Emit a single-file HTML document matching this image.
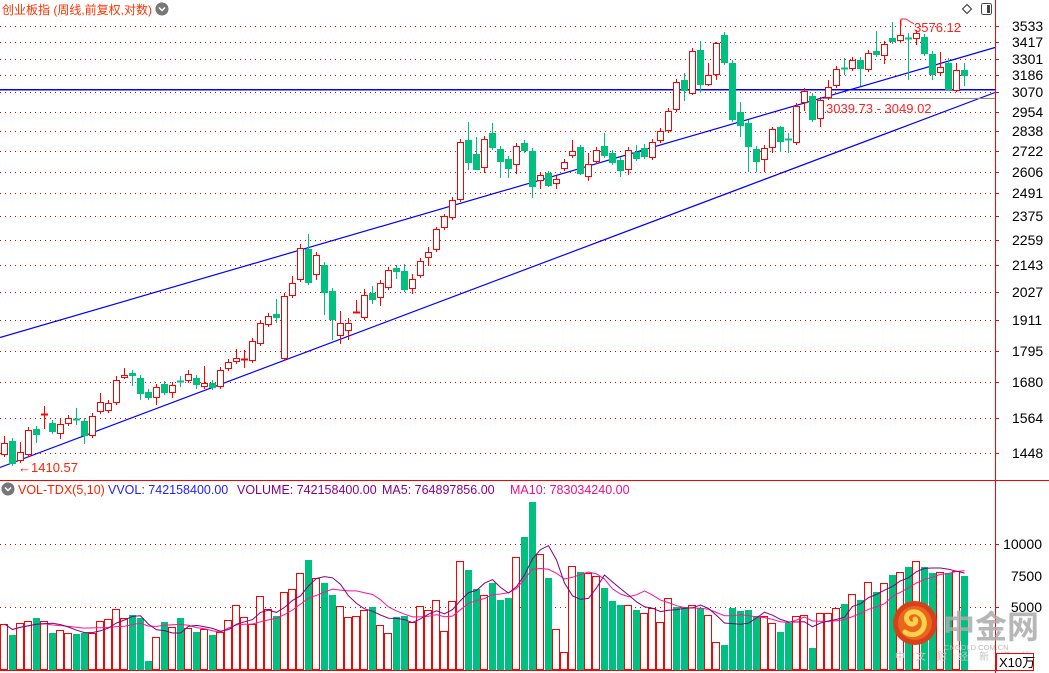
<!DOCTYPE html>
<html><head><meta charset="utf-8">
<style>
html,body{margin:0;padding:0;background:#fff;width:1049px;height:673px;overflow:hidden}
svg{display:block}
text{font-family:"Liberation Sans","Noto Sans CJK SC",sans-serif}
</style></head>
<body>
<svg id="s" width="1049" height="673" viewBox="0 0 1049 673" xmlns="http://www.w3.org/2000/svg" shape-rendering="crispEdges">
<g id="grid"></g>
<g id="lines">
  <line x1="0" y1="337.5" x2="995" y2="47.5" stroke="#0000ff" stroke-width="1.2" shape-rendering="auto"/>
  <line x1="0" y1="467.5" x2="995" y2="92.5" stroke="#0000ff" stroke-width="1.2" shape-rendering="auto"/>
  <line x1="0" y1="89.5" x2="995" y2="89.5" stroke="#0000ff" stroke-width="1.5"/>
  <line x1="823" y1="98.5" x2="995" y2="98.5" stroke="#888" stroke-width="1"/>
</g>
<g id="candles"></g>
<g id="vols"></g>
<g id="ma" shape-rendering="auto"></g>
<line x1="995.5" y1="0" x2="995.5" y2="673" stroke="#ff0000" stroke-width="1"/>
<line x1="0" y1="480.5" x2="1049" y2="480.5" stroke="#ff0000" stroke-width="1"/>
<line x1="0" y1="670.5" x2="996" y2="670.5" stroke="#ff0000" stroke-width="1"/>
<g id="axis" font-size="14" fill="#000"></g>
<text x="2" y="14" font-size="12" fill="#ff3300">创业板指 (周线,前复权,对数)</text>
<circle cx="162" cy="9" r="6.5" fill="#777"/>
<path d="M159 7.5 L162 10.5 L165 7.5" stroke="#fff" stroke-width="1.5" fill="none" shape-rendering="auto"/>
<path d="M967 4.5 L971.5 9 L967 13.5 L962.5 9 Z" stroke="#333" fill="none" shape-rendering="auto"/>
<rect x="981.5" y="3.5" width="10" height="11" rx="2" stroke="#444" fill="none"/>
<rect x="987" y="5" width="3" height="8" fill="#444"/>
<text x="18" y="472" font-size="13" fill="#ff2200">←1410.57</text>
<path d="M901 26 L901 19 L906 19 M906 19 L914 24" stroke="#ff2222" fill="none" shape-rendering="auto"/>
<text x="914" y="32" font-size="13" fill="#ff2222">3576.12</text>
<text x="826" y="113" font-size="13" fill="#ff2222">3039.73 - 3049.02</text>
<circle cx="8" cy="489" r="6.5" fill="#777"/>
<path d="M5 487.5 L8 490.5 L11 487.5" stroke="#fff" stroke-width="1.5" fill="none" shape-rendering="auto"/>
<text x="18" y="494" font-size="12.5" fill="#ff2200">VOL-TDX(5,10)</text>
<text x="108" y="494" font-size="12.5" fill="#2222ff">VVOL: 742158400.00</text>
<text x="237" y="494" font-size="12.5" fill="#880088">VOLUME: 742158400.00</text>
<text x="382" y="494" font-size="12.5" fill="#880088">MA5: 764897856.00</text>
<text x="510" y="494" font-size="12.5" fill="#ee1188">MA10: 783034240.00</text>
<g shape-rendering="auto">
<circle cx="915" cy="623" r="22" fill="#d8401a"/>
<circle cx="915" cy="623" r="17" fill="#e8661e"/>
<path d="M905 632 C916 640 930 628 922 616 C915 607 902 614 908 622 C912 627 918 622 915 619" stroke="#ffd24a" stroke-width="5" fill="none" stroke-linecap="round"/>
<text x="943" y="638" font-size="32" font-weight="bold" fill="#aaaaaa" fill-opacity="0.85">中金网</text>
<text x="944" y="650" font-size="7.5" fill="#bbbbbb">CNGOLD.COM.CN</text>
<text x="895" y="660" font-size="10" fill="#c4c4c4" letter-spacing="11">中文财经新媒体</text>
</g>
<rect x="996.5" y="653.5" width="37" height="17" fill="#fff" stroke="#ff0000"/>
<text x="999" y="667" font-size="13" fill="#000">X10万</text>
</svg>
<script>
(function(){
function X(i){return 4+8*(i-1);}
var g='',ax='';
var labels=[3533,3417,3301,3186,3070,2954,2838,2722,2606,2491,2375,2259,2143,2027,1911,1795,1680,1564,1448];
var ys=[26,42,59,75,92,112,131,151,172,193,216,240,265,292,320,351,382,418,453];
for(var k=0;k<labels.length;k++){
 var y=ys[k]+0.5;
 g+='<line x1="0" y1="'+y+'" x2="995" y2="'+y+'" stroke="#dd0000" stroke-width="1" stroke-dasharray="1,4"/>';
 g+='<line x1="995" y1="'+y+'" x2="999" y2="'+y+'" stroke="#ff0000"/>';
 ax+='<text x="1012" y="'+(ys[k]+5)+'">'+labels[k]+'</text>';
}
[544,607].forEach(function(y){g+='<line x1="0" y1="'+(y+0.5)+'" x2="995" y2="'+(y+0.5)+'" stroke="#dd0000" stroke-dasharray="1,4"/><line x1="995" y1="'+(y+.5)+'" x2="999" y2="'+(y+.5)+'" stroke="#ff0000"/>';});
ax+='<text x="1042" y="549" text-anchor="end">10000</text><text x="1042" y="581" text-anchor="end">7500</text><text x="1042" y="612" text-anchor="end">5000</text>';
document.getElementById('grid').innerHTML=g;
document.getElementById('axis').innerHTML=ax;
var C=[[1,443,454,436,0],[0,441,463,438,466],[1,452,460,442,0],[1,430,454,0,0],[0,429,434,0,443],[1,414,415,406,429],[0,423,431,0,0],[1,424,433,419,439],[1,418,423,0,0],[0,419,420,408,425],
[0,421,435,0,444],[1,416,435,0,0],[1,402,411,393,0],[1,403,410,0,0],[1,380,402,376,0],[1,375,377,368,379],[0,373,375,370,386],[0,378,393,0,400],[0,392,397,0,0],[1,387,397,0,405],
[0,384,392,381,0],[1,385,392,0,398],[0,381,382,376,387],[1,374,380,370,0],[0,378,384,0,389],[1,383,386,366,0],[0,383,387,0,0],[1,370,386,0,0],[1,362,368,0,0],[1,358,361,349,0],
[1,359,360,350,368],[1,341,360,0,0],[1,323,343,0,0],[1,316,324,0,0],[0,314,317,299,323],[1,296,358,0,0],[1,283,295,276,0],[1,248,279,244,0],[0,249,282,234,0],[1,255,274,0,280],
[0,265,292,262,315],[0,291,319,0,340],[1,323,335,311,344],[1,323,330,318,340],[1,312,313,300,313],[1,295,317,289,0],[0,293,299,286,304],[1,283,297,0,306],[1,270,287,0,0],[0,268,271,265,279],
[0,271,289,264,0],[1,279,288,274,294],[1,261,275,0,0],[1,252,257,247,266],[1,229,249,227,0],[1,216,227,214,0],[1,200,217,0,0],[1,142,199,139,0],[0,140,162,122,170],[0,154,169,137,170],
[1,139,167,136,173],[0,133,147,123,0],[0,149,161,0,178],[0,159,168,0,178],[1,146,164,0,174],[0,143,150,140,0],[0,151,186,148,198],[1,175,180,172,189],[0,173,185,171,187],[1,179,183,0,189],
[1,162,168,0,0],[1,151,155,140,0],[0,147,173,145,175],[1,164,176,153,181],[1,150,161,0,0],[0,146,155,133,0],[0,153,162,0,0],[0,160,170,0,177],[1,150,169,0,175],[0,152,158,145,0],
[0,148,156,144,0],[1,142,157,0,0],[1,131,140,0,0],[1,111,130,0,0],[1,82,109,0,0],[0,80,90,73,101],[1,51,93,0,95],[0,50,84,41,93],[1,75,84,63,86],[1,43,74,42,80],
[0,35,62,0,0],[0,63,119,0,0],[0,112,125,102,137],[0,123,146,0,172],[0,149,161,0,172],[1,148,159,0,172],[1,129,147,127,153],[0,127,141,126,152],[0,139,140,133,153],[1,106,142,0,0],
[1,91,102,0,111],[0,96,119,0,0],[1,100,118,0,127],[1,87,97,80,0],[1,69,85,0,0],[0,68,69,58,75],[1,60,68,0,0],[0,60,68,0,86],[1,53,69,0,0],[0,51,54,31,0],
[1,44,55,0,64],[0,38,41,22,0],[1,35,40,20,0],[0,38,39,33,80],[1,33,38,0,45],[0,37,53,0,0],[0,54,74,0,80],[1,67,72,52,75],[0,63,89,58,90],[1,70,90,63,92],[0,70,75,63,86]];
var s='';
for(var i=0;i<C.length;i++){
 var c=C[i],x=X(i+1),t=c[1],b=c[2],h=c[3]||t-3,l=c[4]||b+3;
 var col=c[0]?'#ff0000':'#00c080';
 s+='<line x1="'+(x+0.5)+'" y1="'+h+'" x2="'+(x+0.5)+'" y2="'+l+'" stroke="'+col+'"/>';
 if(b-t<2){s+='<line x1="'+(x-3)+'" y1="'+(t+0.5)+'" x2="'+(x+4)+'" y2="'+(t+0.5)+'" stroke="'+col+'" stroke-width="2"/>';}
 else if(c[0]){s+='<rect x="'+(x-2.5)+'" y="'+(t+0.5)+'" width="6" height="'+(b-t)+'" fill="#fff" stroke="#ff0000"/>';}
 else{s+='<rect x="'+(x-3)+'" y="'+t+'" width="7" height="'+(b-t+1)+'" fill="#00c080"/>';}
}
document.getElementById('candles').innerHTML=s;
var V='r624 g635 r623 r621 g618 r621 g633 r630 r633 g634 g633 r633 r621 r619 r609 r618 g615 g618 g661 r637 g622 r627 g618 r628 g632 r629 g635 r632 r620 r605 r617 r624 r596 r609 g616 r592 r589 r573 g560 r578 g583 g595 r606 r617 r616 r610 g607 r625 r633 g617 g616 r622 r606 r610 r600 r631 r601 r561 g570 g589 r595 g583 g600 g598 r557 g537 g502 r554 g578 r629 r652 r566 g572 r573 r576 g588 g601 g605 r605 g610 r613 r608 r622 r598 g607 g607 r605 g608 r615 r642 g645 g608 g611 g610 g616 r616 r623 g632 g623 r616 r615 g648 r613 r613 r608 g604 r594 g600 r582 g592 r583 g575 r572 g567 r561 g567 g573 r572 g573 r571 g576'.split(' ');
var v='',H=[];
for(var i=0;i<V.length;i++){
 var col=V[i][0],top=+V[i].slice(1),x=X(i+1);H.push(669-top);
 if(col=='r')v+='<rect x="'+(x-3.5)+'" y="'+(top+0.5)+'" width="7" height="'+(669-top)+'" fill="#fff" stroke="#ff0000"/>';
 else v+='<rect x="'+(x-3)+'" y="'+top+'" width="7" height="'+(670-top)+'" fill="#00c080"/>';
}
document.getElementById('vols').innerHTML=v;
function ma(n){var p=[];for(var i=0;i<H.length;i++){var a=0,m=0;for(var j=Math.max(0,i-n+1);j<=i;j++){a+=H[j];m++;}p.push((X(i+1)+0.5)+','+(669-a/m).toFixed(1));}return p.join(' ');}
document.getElementById('ma').innerHTML='<polyline points="'+ma(10)+'" fill="none" stroke="#ff1493" stroke-width="1"/><polyline points="'+ma(5)+'" fill="none" stroke="#800080" stroke-width="1"/>';
})();
</script>
</body></html>
